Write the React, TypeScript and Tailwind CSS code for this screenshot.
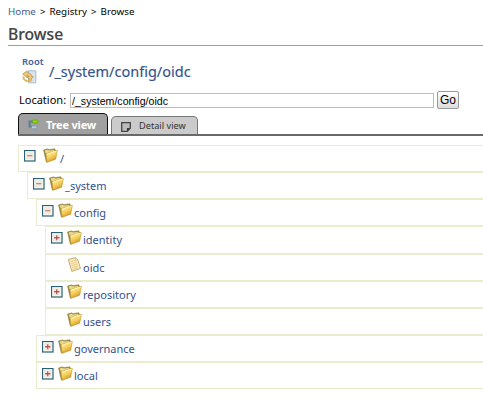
import React from 'react';

function Folder() {
  return (
    <svg width="15" height="15" viewBox="0 0 15 15" className="block shrink-0">
      <defs>
        <linearGradient id="front" x1="0.2" y1="0" x2="0.7" y2="1">
          <stop offset="0" stopColor="#fff3a6" />
          <stop offset=".5" stopColor="#f5cf5c" />
          <stop offset="1" stopColor="#cb8815" />
        </linearGradient>
      </defs>
      <path d="M.6 2 4.6.9l1.4.8L11.6.8l1 1.6-1 8L3.4 14Z" fill="#a68c3a" stroke="#7f6e30" strokeWidth=".6" />
      <path d="m1.6 2.6 2.9-.9 1.5.9 5.2-.8.5 2L3 6Z" fill="#e9da8e" />
      <path d="m3 5.6 3.4-.9L7.6 3.6l6.8-1.2-1.7 8.8-8.8 3.2Z" fill="url(#front)" stroke="#b88a26" strokeWidth=".5" />
      <path d="m3.8 6.2 3.1-.7 1.1-1.1 5.6-1" fill="none" stroke="#fffcd8" strokeWidth=".8" />
    </svg>
  );
}

function Note() {
  return (
    <svg width="15" height="15" viewBox="0 0 15 15" className="block shrink-0">
      <path d="M1.3 2.4 8.5.7l2.2 1.9 2.8 8.8-8.7 3Z" fill="#fdeaba" stroke="#bfa568" strokeWidth=".9" />
      <path d="m3.3 4.6 5-1.2M3.9 6.6l6-1.5M4.5 8.6l6-1.6M5 10.5l6-1.6M5.6 12.4l5.2-1.6" stroke="#dcc080" strokeWidth=".7" />
      <path d="m8.4.8.4 2.4 1.9-.5" fill="#fffaf0" stroke="#b99d67" strokeWidth=".5" />
    </svg>
  );
}

function Toggle({ plus }: { plus: boolean }) {
  return (
    <svg width="12" height="12" viewBox="0 0 12 12" className="block shrink-0">
      <rect x=".5" y=".5" width="10.5" height="10.5" fill="#fafaf4" stroke="#2b6076" strokeWidth="1.2" />
      <rect x="2" y="2" width="7.5" height="7.5" fill="#eeece0" />
      <path d="M3.2 5.7h5.1" stroke="#c9706c" strokeWidth="1.1" />
      {plus && <path d="M5.75 3.2v5.1M3.2 5.7h5.1" stroke="#bf3f48" strokeWidth="1.1" />}
    </svg>
  );
}

const rows = [
  { name: '/', kind: 'minus', box: 'ml-[18px] h-[27px] pt-[2px]', icon: 'ml-[3px]', label: 'ml-[2px] leading-[22px]' },
  { name: '_system', kind: 'minus', box: 'ml-[27px] h-[27px] pt-[3px]', icon: '', label: 'ml-[1px] leading-[20px]' },
  { name: 'config', kind: 'minus', box: 'ml-[36px] h-[27px] pt-[3px]', icon: '', label: 'ml-[1px] leading-[20px]' },
  { name: 'identity', kind: 'plus', box: 'ml-[45px] h-[28px] pt-[3px]', icon: '', label: 'ml-[1px] leading-[20px]' },
  { name: 'oidc', kind: 'note', box: 'ml-[45px] h-[27px] pt-[2px]', icon: '', label: 'ml-[1px] leading-[22px]' },
  { name: 'repository', kind: 'plus', box: 'ml-[45px] h-[27px] pt-[2px]', icon: '', label: 'ml-[1px] leading-[22px]' },
  { name: 'users', kind: 'leaf', box: 'ml-[45px] h-[27px] pt-[3px]', icon: '', label: 'ml-[1px] leading-[20px]' },
  { name: 'governance', kind: 'plus', box: 'ml-[36px] h-[27px] pt-[3px]', icon: '', label: 'ml-[1px] leading-[20px]' },
  { name: 'local', kind: 'plus', box: 'ml-[36px] h-[27px] pt-[3px]', icon: '', label: 'ml-[1px] leading-[20px]' },
];

export default function App() {
  return (
    <main className="h-[403px] w-[483px] overflow-hidden bg-white font-['Noto_Sans',sans-serif] text-[11px] text-[#34528b]">
      <nav className="flex h-[23px] items-center gap-[4px] pl-2 text-[9.8px] leading-[23px] text-black">
        <span className="text-[#3f5c94]">Home</span><span>&gt;</span><span>Registry</span><span>&gt;</span><span>Browse</span>
      </nav>
      <h1 className="ml-2 h-[23px] border-b border-[#8f9fc6] text-[15.7px] leading-[22px] font-medium text-[#444] [-webkit-text-stroke:0.15px_#444]">Browse</h1>
      <div className="flex h-[43px] pt-[8px] pl-[22px]">
        <div className="w-[27px]">
          <div className="text-[9.5px] leading-[16px] font-semibold text-[#3f5f9f]">Root</div>
          <svg width="15" height="14" viewBox="0 0 15 14" className="block">
            <path d="M6.5.8h7.3v12H6.5Z" fill="#d9e6f1" stroke="#a3b3c3" strokeWidth=".9" />
            <path d="M.6 4 5.2.8v2.1c3 0 4.6 1.4 4.7 3.7h1.6L8.2 10 5 6.8h1.8c0-.9-.6-1.2-1.6-1.2v2Z" fill="#edc675" stroke="#b08538" strokeWidth=".6" />
            <path d="M1.4 6.4c-.4 4.4 5.4 6.4 8.6 3.2" fill="none" stroke="#e3b65c" strokeWidth="1.9" />
          </svg>
        </div>
        <div className="text-[14.5px] leading-[34px] text-[#34528b] [-webkit-text-stroke:0.15px_#34528b]">/_system/config/oidc</div>
      </div>
      <div className="flex h-[22px] items-start pt-[2px] pl-[19px] text-[11px] text-black">
        <label className="w-[51px] leading-[18px] whitespace-nowrap">Location:</label>
        <input className="mt-[2px] h-[15px] w-[364px] border border-[#bdbdbd] px-px font-['Liberation_Sans',sans-serif] text-[10.6px] leading-[13px]" defaultValue="/_system/config/oidc" />
        <button className="ml-[3px] h-[18px] w-[22px] rounded-[2px] border border-[#999] bg-linear-to-b from-white to-[#ddd] font-['Liberation_Sans',sans-serif] text-[12px] leading-[15px]">Go</button>
      </div>
      <div className="ml-[18px] flex h-[25px] items-end border-b-2 border-[#696969]">
        <div className="flex h-[21px] w-[90px] items-center rounded-t-[5px] border border-b-0 border-[#111] bg-[#a0a0a0] pt-[2px] pl-[9px] text-[11px] font-bold text-white">
          <svg width="11" height="11" viewBox="0 0 11 11" className="-mt-[2px] shrink-0">
            <path d="M5 2.5H1.5v5H4" fill="none" stroke="#5b8090" strokeWidth="2" />
            <rect x="4.5" y="1" width="5.5" height="3" rx="1" fill="#8fdc0a" stroke="#6aa015" strokeWidth=".8" />
            <rect x="3.5" y="6.8" width="5.5" height="3" rx="1" fill="#b3cbd9" stroke="#7793a5" strokeWidth=".8" />
          </svg>
          <span className="ml-[7px] tracking-[-0.2px] whitespace-nowrap">Tree view</span>
        </div>
        <div className="ml-[3px] flex h-[18px] w-[87px] items-center rounded-t-[5px] border border-b-0 border-[#777] bg-[#cbcbcb] pt-px pl-[9px] text-[9.2px] text-[#333]">
          <svg width="10" height="10" viewBox="0 0 10 10" className="mt-px shrink-0">
            <path d="M.7.7h8.6v5.6l-3 3H.7Z" fill="#bbb" stroke="#444" strokeWidth="1.3" />
            <path d="M9 6H6v3Z" fill="#333" />
          </svg>
          <span className="ml-[8px] whitespace-nowrap">Detail view</span>
        </div>
      </div>
      <div className="pt-[9px]">
        {rows.map((r) => (
          <div key={r.name} className={`${r.box} flex items-start border-y border-l border-[#ebebcf] pl-[5px]`}>
            <div className="mt-[2px] w-[16px] shrink-0">
              {(r.kind === 'plus' || r.kind === 'minus') && <Toggle plus={r.kind === 'plus'} />}
            </div>
            <div className={r.icon}>{r.kind === 'note' ? <Note /> : <Folder />}</div>
            <span className={r.label}>{r.name}</span>
          </div>
        ))}
      </div>
    </main>
  );
}
